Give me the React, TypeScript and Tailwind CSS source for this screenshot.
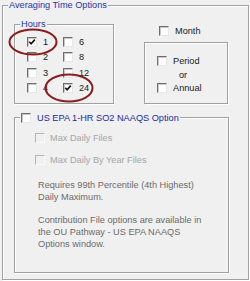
import React from "react";

function CB({ checked = false, disabled = false }: { checked?: boolean; disabled?: boolean }) {
  return (
    <span
      className={
        disabled
          ? "relative block w-[10px] h-[10px] shrink-0 border border-t-[#b4b4b4] border-l-[#b4b4b4] border-b-[#fafafa] border-r-[#fafafa] bg-[#f0f0f0]"
          : "relative block w-[10px] h-[10px] shrink-0 border border-t-[#6e6e6e] border-l-[#6e6e6e] border-b-[#e6e6e6] border-r-[#e6e6e6] bg-white shadow-[inset_1px_1px_0_#c8c8c8]"
      }
    >
      {checked && (
        <svg className="absolute left-0 top-0" width="8" height="8" viewBox="0 0 8 8">
          <path d="M1.3 3.8 L3.1 5.8 L6.8 1.6" stroke="#111" strokeWidth="1.6" fill="none" />
        </svg>
      )}
    </span>
  );
}

function Item({ label, checked = false }: { label: string; checked?: boolean }) {
  return (
    <div className="flex items-center h-[10px] gap-[6px]">
      <CB checked={checked} />
      <span className="leading-[10px]">{label}</span>
    </div>
  );
}

const etched = "border border-[#a0a0a0] shadow-[inset_1px_1px_0_#fff,1px_1px_0_#fff]";

export default function App() {
  return (
    <div className="relative w-[250px] h-[281px] bg-[#f0f0f0] pt-[5px] pl-[2px] font-['Liberation_Sans',Arial,sans-serif] text-[9.2px] leading-[12px] text-[#1a1a1a]">
      <div className={`relative w-[247px] h-[275px] pl-[11px] pt-[18px] ${etched}`}>
        <span className="absolute left-[5px] top-[-7px] bg-[#f0f0f0] px-[1px] text-[#2436a6]">
          Averaging Time Options
        </span>
        <div className="flex">
          <div className={`relative w-[100px] h-[80px] pl-[12px] pt-[12px] ${etched}`}>
            <span className="absolute left-[5px] top-[-7px] bg-[#f0f0f0] px-[1px] text-[#2436a6]">Hours</span>
            <div className="grid grid-cols-[36px_36px] gap-y-[5.33px]">
              <Item label="1" checked />
              <Item label="6" />
              <Item label="2" />
              <Item label="8" />
              <Item label="3" />
              <Item label="12" />
              <Item label="4" />
              <Item label="24" checked />
            </div>
          </div>
          <div className="ml-[30px] pt-[2px]">
            <div className="pl-[15px]">
              <Item label="Month" />
            </div>
            <div className={`mt-[6px] w-[84px] h-[62px] pl-[12px] pt-[13px] ${etched}`}>
              <Item label="Period" />
              <div className="mt-[3px] ml-[22px] leading-[12px]">or</div>
              <div className="mt-[2px]">
                <Item label="Annual" />
              </div>
            </div>
          </div>
        </div>
        <div className={`relative mt-[13px] w-[215px] h-[156px] pl-[20px] pt-[15px] ${etched}`}>
          <div className="absolute left-[5px] top-[-6.5px] flex items-center gap-[6px] bg-[#f0f0f0] px-[1px] h-[12px]">
            <CB />
            <span className="text-[#1c2a9e]">US EPA 1-HR SO2 NAAQS Option</span>
          </div>
          <div className="flex items-center h-[10px] gap-[5px] text-[#a6a6a6]">
            <CB disabled />
            <span className="leading-[10px]">Max Daily Files</span>
          </div>
          <div className="mt-[12px] flex items-center h-[10px] gap-[5px] text-[#a6a6a6]">
            <CB disabled />
            <span className="leading-[10px]">Max Daily By Year Files</span>
          </div>
          <div className="mt-[15px] ml-[3px] leading-[11.7px] text-[#6b6b6b] whitespace-nowrap">
            <div>Requires 99th Percentile (4th Highest)</div>
            <div>Daily Maximum.</div>
            <div className="mt-[11.7px]">Contribution File options are available in</div>
            <div>the OU Pathway - US EPA NAAQS</div>
            <div>Options window.</div>
          </div>
        </div>
      </div>
      <svg className="absolute left-0 top-0 pointer-events-none" width="250" height="281" viewBox="0 0 250 281">
        <ellipse cx="33" cy="42" rx="23.5" ry="12.5" fill="none" stroke="#8b1c1c" strokeWidth="2" />
        <ellipse cx="69" cy="88" rx="23.5" ry="13.5" fill="none" stroke="#8b1c1c" strokeWidth="2" />
      </svg>
    </div>
  );
}
